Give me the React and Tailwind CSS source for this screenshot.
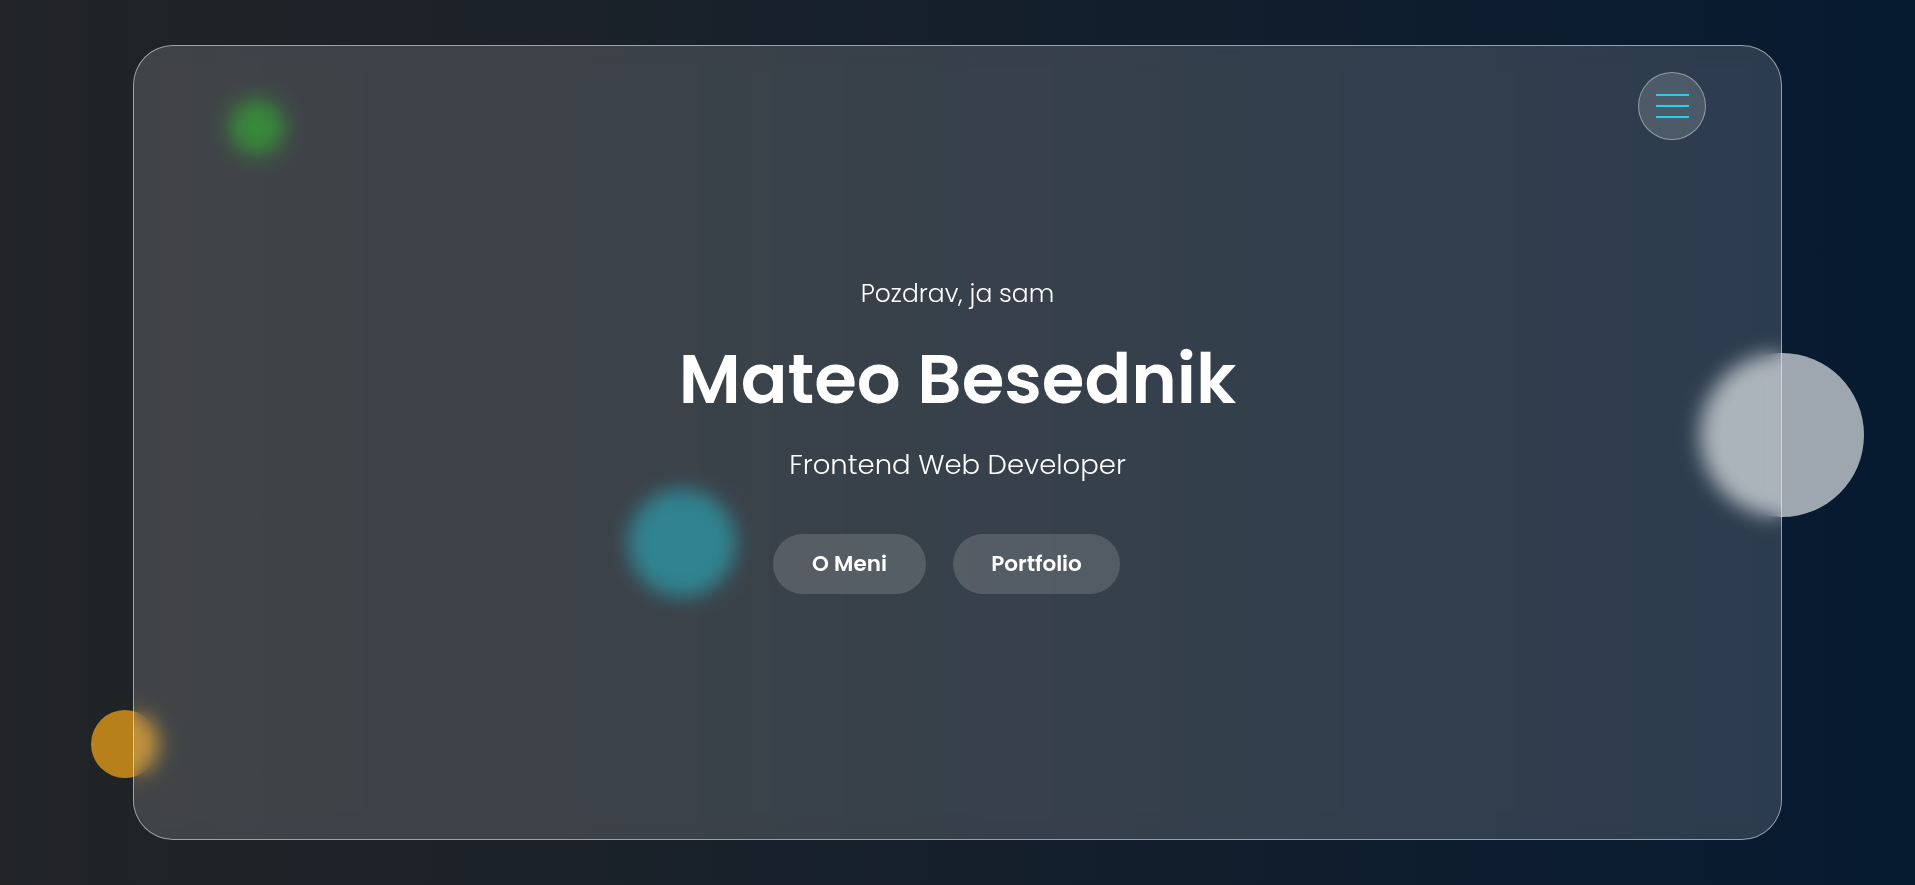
import { useState } from 'react';

const font = { fontFamily: 'Poppins, Inter, "Noto Sans", sans-serif' };

function MenuButton({ onClick }) {
  return (
    <button
      onClick={onClick}
      className="w-[68px] h-[68px] rounded-full bg-white/15 border border-white/40 flex flex-col items-center justify-center gap-[9px]"
      aria-label="Menu"
    >
      <span className="block w-[33px] h-[2px] bg-[#22d3ee]" />
      <span className="block w-[33px] h-[2px] bg-[#22d3ee]" />
      <span className="block w-[33px] h-[2px] bg-[#22d3ee]" />
    </button>
  );
}

export default function App() {
  const [menuOpen, setMenuOpen] = useState(false);

  return (
    <div
      style={font}
      className="relative w-full h-[885px] overflow-hidden bg-gradient-to-r from-[#222426] to-[#061a30] flex items-center justify-center"
    >
      {/* blobs behind the glass */}
      <div className="absolute left-[229px] top-[99px] w-[56px] h-[56px] rounded-full bg-[#167319]" />
      <div className="absolute left-[628px] top-[489px] w-[108px] h-[108px] rounded-full bg-[#0e6e7e]" />
      <div className="absolute left-[1700px] top-[353px] w-[164px] h-[164px] rounded-full bg-[#9ea7b0]" />
      <div className="absolute left-[91px] top-[710px] w-[68px] h-[68px] rounded-full bg-[#b7801a]" />

      <div className="relative w-[1649px] h-[795px] rounded-[40px] border border-white/50 bg-white/15 backdrop-blur-[10px] flex flex-col items-center justify-center pb-[12px] text-white">
        <div className="absolute right-[75px] top-[26px]">
          <MenuButton onClick={() => setMenuOpen(!menuOpen)} />
        </div>

        <p className="text-[25px] leading-[30px] font-light">Pozdrav, ja sam</p>
        <h1 className="mt-[30px] text-[69px] leading-[80px] font-semibold">Mateo Besednik</h1>
        <p className="mt-[29px] text-[27.5px] leading-[34px] font-light">Frontend Web Developer</p>
        <div className="mt-[52px] mr-[22px] flex gap-[27px]">
          <button className="h-[60px] w-[153px] rounded-full bg-white/15 text-[21.5px] font-semibold">O Meni</button>
          <button className="h-[60px] w-[167px] rounded-full bg-white/15 text-[21.5px] font-semibold">Portfolio</button>
        </div>
      </div>
    </div>
  );
}
